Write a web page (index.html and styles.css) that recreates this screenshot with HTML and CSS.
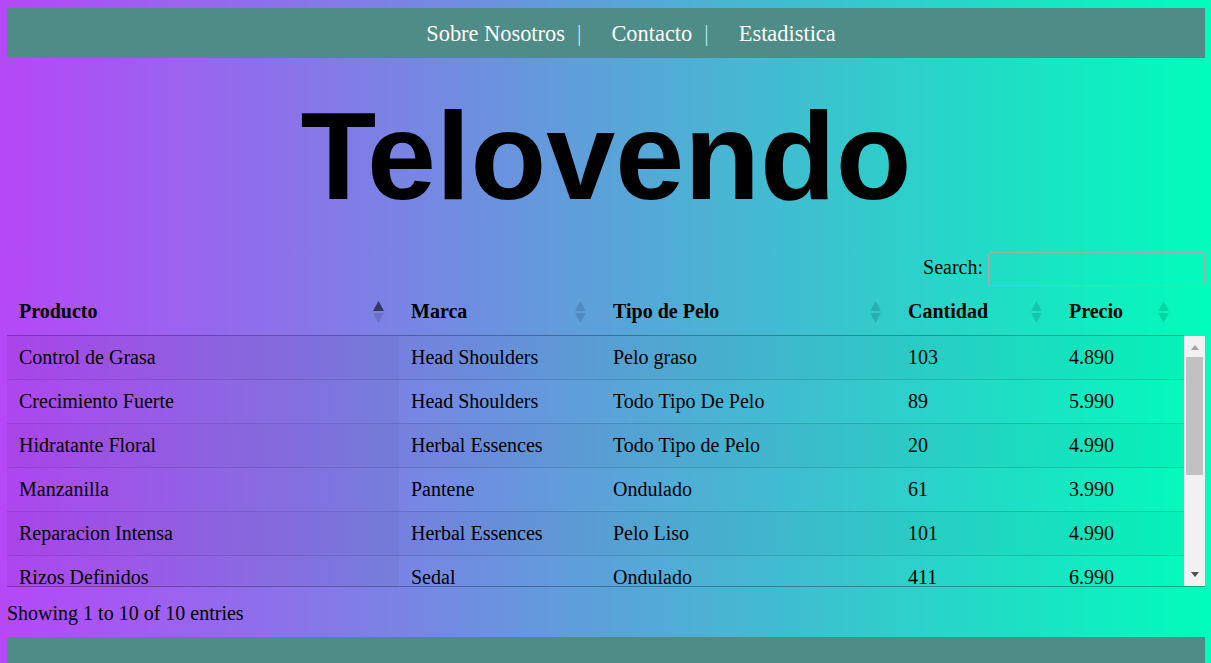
FILE: index.html
```html
<!DOCTYPE html>
<html lang="es">
<head>
<meta charset="utf-8">
<title>Telovendo</title>
<link rel="stylesheet" href="styles.css">
</head>
<body>
<nav class="topnav">
  <a class="nav-link" href="#">Sobre Nosotros</a><span class="nav-sep">|</span>
  <a class="nav-link" href="#">Contacto</a><span class="nav-sep">|</span>
  <a class="nav-link" href="#">Estadistica</a>
</nav>

<h1 class="brand">Telovendo</h1>

<section class="dt-wrapper">
  <div class="dt-filter">
    <label class="dt-filter-label"><span class="dt-filter-text">Search:</span><input class="dt-search" type="search"></label>
  </div>

  <div class="dt-scroll-head">
    <table class="dt-table">
      <colgroup>
        <col class="c1"><col class="c2"><col class="c3"><col class="c4"><col class="c5">
      </colgroup>
      <thead>
        <tr>
          <th><div class="th-inner"><span>Producto</span><svg class="sort-icon" width="11" height="22" viewBox="0 0 11 22"><polygon class="on" points="0,10 5.5,0 11,10"/><polygon class="off" points="0,12 5.5,22 11,12"/></svg></div></th>
          <th><div class="th-inner"><span>Marca</span><svg class="sort-icon" width="11" height="22" viewBox="0 0 11 22"><polygon class="off" points="0,10 5.5,0 11,10"/><polygon class="off" points="0,12 5.5,22 11,12"/></svg></div></th>
          <th><div class="th-inner"><span>Tipo de Pelo</span><svg class="sort-icon" width="11" height="22" viewBox="0 0 11 22"><polygon class="off" points="0,10 5.5,0 11,10"/><polygon class="off" points="0,12 5.5,22 11,12"/></svg></div></th>
          <th><div class="th-inner"><span>Cantidad</span><svg class="sort-icon" width="11" height="22" viewBox="0 0 11 22"><polygon class="off" points="0,10 5.5,0 11,10"/><polygon class="off" points="0,12 5.5,22 11,12"/></svg></div></th>
          <th><div class="th-inner"><span>Precio</span><svg class="sort-icon" width="11" height="22" viewBox="0 0 11 22"><polygon class="off" points="0,10 5.5,0 11,10"/><polygon class="off" points="0,12 5.5,22 11,12"/></svg></div></th>
        </tr>
      </thead>
    </table>
  </div>

  <div class="dt-scroll-body">
    <div class="dt-viewport">
      <table class="dt-table dt-body">
        <colgroup>
          <col class="c1"><col class="c2"><col class="c3"><col class="c4"><col class="c5">
        </colgroup>
        <tbody>
          <tr class="odd"><td class="sorted">Control de Grasa</td><td>Head Shoulders</td><td>Pelo graso</td><td>103</td><td>4.890</td></tr>
          <tr class="even"><td class="sorted">Crecimiento Fuerte</td><td>Head Shoulders</td><td>Todo Tipo De Pelo</td><td>89</td><td>5.990</td></tr>
          <tr class="odd"><td class="sorted">Hidratante Floral</td><td>Herbal Essences</td><td>Todo Tipo de Pelo</td><td>20</td><td>4.990</td></tr>
          <tr class="even"><td class="sorted">Manzanilla</td><td>Pantene</td><td>Ondulado</td><td>61</td><td>3.990</td></tr>
          <tr class="odd"><td class="sorted">Reparacion Intensa</td><td>Herbal Essences</td><td>Pelo Liso</td><td>101</td><td>4.990</td></tr>
          <tr class="even"><td class="sorted">Rizos Definidos</td><td>Sedal</td><td>Ondulado</td><td>411</td><td>6.990</td></tr>
          <tr class="odd"><td class="sorted">Suavidad y Brillo</td><td>Pantene</td><td>Pelo Seco</td><td>75</td><td>4.490</td></tr>
          <tr class="even"><td class="sorted">Ultra Suave</td><td>Sedal</td><td>Pelo Liso</td><td>150</td><td>3.490</td></tr>
          <tr class="odd"><td class="sorted">Volumen Total</td><td>Elvive</td><td>Pelo Fino</td><td>58</td><td>5.490</td></tr>
          <tr class="even"><td class="sorted">Zanahoria</td><td>Sedal</td><td>Todo Tipo de Pelo</td><td>33</td><td>2.990</td></tr>
        </tbody>
      </table>
    </div>
    <div class="scrollbar" aria-hidden="true">
      <div class="sb-btn sb-up"><span class="sb-arrow-up"></span></div>
      <div class="sb-track"><div class="sb-thumb"></div></div>
      <div class="sb-btn sb-down"><span class="sb-arrow-down"></span></div>
    </div>
  </div>

  <div class="dt-info">Showing 1 to 10 of 10 entries</div>
</section>

<footer class="footer"></footer>
</body>
</html>
```

FILE: styles.css
```css
html {
  min-height: 100%;
  background: linear-gradient(90deg, #b548f8 0%, #00fdbb 100%);
}

body {
  margin: 8px 6px 0 7px;
  font-family: "Liberation Serif", "Times New Roman", serif;
  font-size: 20px;
  color: #000;
}

/* top navigation */
.topnav {
  box-sizing: border-box;
  height: 50px;
  padding: 2px 0 0 50px;
  background: #4f8b87;
  display: flex;
  align-items: center;
  justify-content: center;
  font-size: 22.4px;
}

.nav-link {
  color: #fff;
  text-decoration: none;
}

.nav-sep {
  color: #b0eaf0;
  margin: 0 30px 0 12px;
}

/* title */
.brand {
  margin: 36px 0 34px;
  font-family: "Liberation Sans", Arial, sans-serif;
  font-size: 124px;
  line-height: 124px;
  font-weight: bold;
  text-align: center;
}

/* data table */
.dt-filter {
  display: flex;
  justify-content: flex-end;
  margin-bottom: 3px;
}

.dt-filter-label {
  display: flex;
  align-items: flex-start;
}

.dt-filter-text {
  padding-top: 4px;
}

.dt-search {
  box-sizing: border-box;
  width: 217px;
  height: 34px;
  margin-left: 5px;
  padding: 5px;
  border: 1px solid #aaa;
  border-radius: 3px;
  background: transparent;
  font: inherit;
  color: inherit;
}

.dt-scroll-head {
  padding-right: 21px;
}

.dt-table {
  width: 100%;
  table-layout: fixed;
  border-collapse: separate;
  border-spacing: 0;
}

.c1 { width: 392px; }
.c2 { width: 202px; }
.c3 { width: 295px; }
.c4 { width: 161px; }
.c5 { width: 127px; }

.dt-table th {
  padding: 11px 15px 12px 12px;
  text-align: left;
  font-weight: bold;
  border-bottom: 1px solid rgba(0, 0, 0, 0.3);
}

.th-inner {
  display: flex;
  justify-content: space-between;
  align-items: center;
  white-space: nowrap;
}

.sort-icon {
  flex: none;
  display: block;
}

.sort-icon .on { fill: #000; fill-opacity: 0.58; }
.sort-icon .off { fill: #000; fill-opacity: 0.13; }

.dt-scroll-body {
  display: flex;
  height: 250px;
  border-bottom: 1px solid rgba(0, 0, 0, 0.3);
}

.dt-viewport {
  flex: 1;
  min-width: 0;
  overflow: hidden;
}

.dt-body td {
  padding: 10px 12px;
  border-top: 1px solid rgba(0, 0, 0, 0.15);
  white-space: nowrap;
}

.dt-body tr:first-child td {
  border-top: none;
}

.dt-body tr.odd td {
  box-shadow: inset 0 0 0 9999px rgba(0, 0, 0, 0.023);
}

.dt-body tr.odd td.sorted {
  box-shadow: inset 0 0 0 9999px rgba(0, 0, 0, 0.054);
}

.dt-body tr.even td.sorted {
  box-shadow: inset 0 0 0 9999px rgba(0, 0, 0, 0.035);
}

/* drawn scrollbar */
.scrollbar {
  flex: none;
  width: 21px;
  display: flex;
  flex-direction: column;
  background: #f1f1f1;
}

.sb-btn {
  flex: none;
  height: 20px;
  display: flex;
  justify-content: center;
  align-items: flex-start;
}

.sb-arrow-up {
  margin-top: 9px;
  width: 0;
  height: 0;
  border-left: 4.5px solid transparent;
  border-right: 4.5px solid transparent;
  border-bottom: 5px solid #a3a3a3;
}

.sb-arrow-down {
  margin-top: 6px;
  width: 0;
  height: 0;
  border-left: 4.5px solid transparent;
  border-right: 4.5px solid transparent;
  border-top: 5px solid #505050;
}

.sb-track {
  flex: 1;
  padding: 1px 2px 0;
}

.sb-thumb {
  height: 118px;
  background: #c1c1c1;
}

.dt-info {
  padding-top: 15px;
}

/* footer */
.footer {
  height: 26px;
  margin-top: 12px;
  background: #4f8b87;
}
```
